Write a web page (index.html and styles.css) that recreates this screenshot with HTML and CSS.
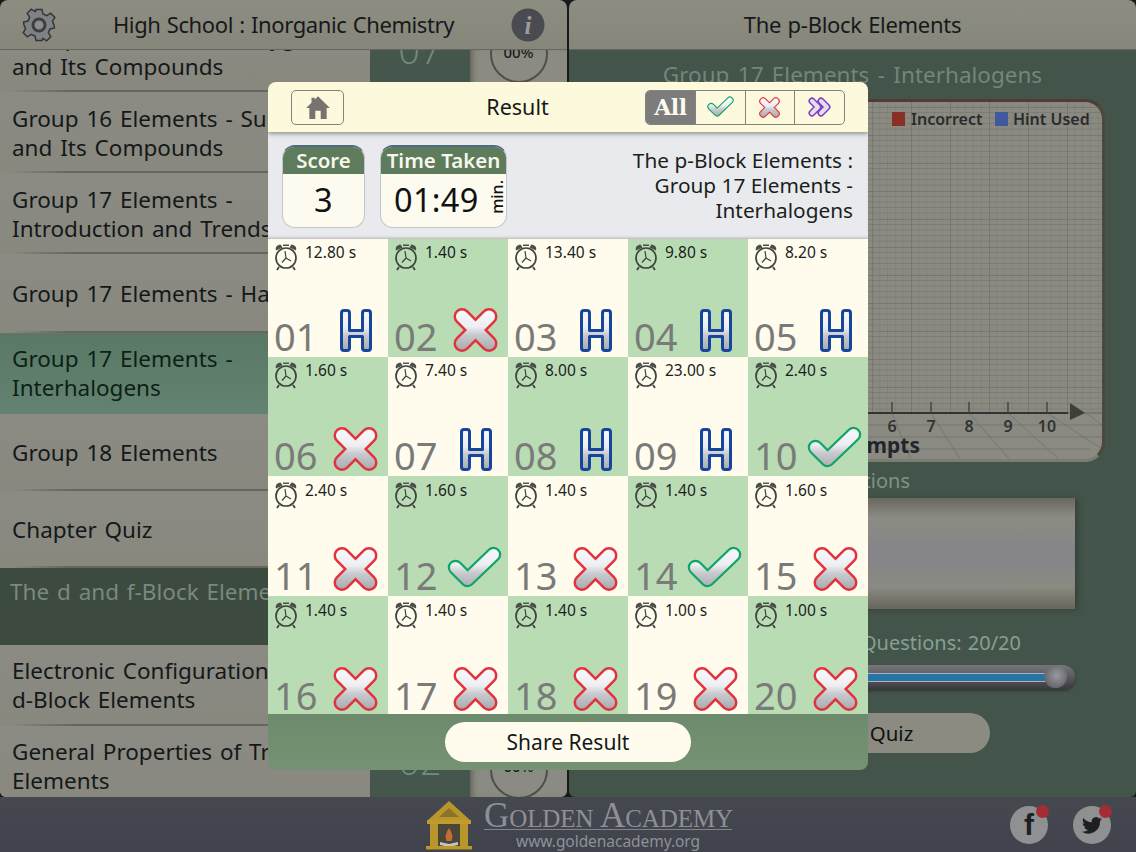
FILE: index.html
```html
<!DOCTYPE html>
<html lang="en">
<head>
<meta charset="utf-8">
<title>Golden Academy - Result</title>
<link rel="stylesheet" href="styles.css">
</head>
<body>
<svg class="defs" width="0" height="0" aria-hidden="true">
  <defs>
    <linearGradient id="metal" x1="0" y1="0" x2="0" y2="1">
      <stop offset="0" stop-color="#f6f7fb"/><stop offset=".42" stop-color="#eceef2"/><stop offset=".62" stop-color="#c9cacd"/><stop offset="1" stop-color="#a9abaf"/>
    </linearGradient>
    <linearGradient id="metalX" gradientUnits="userSpaceOnUse" x1="0" y1="2" x2="0" y2="42">
      <stop offset="0" stop-color="#f8f9fd"/><stop offset=".42" stop-color="#eceef2"/><stop offset=".62" stop-color="#c9cacd"/><stop offset="1" stop-color="#a9abaf"/>
    </linearGradient>
    <pattern id="grid" width="39" height="28" patternUnits="userSpaceOnUse" x="-1" y="8">
      <rect width="39" height="28" fill="none"/>
      <path d="M0 5.500H39M0 11H39M0 16.500H39M0 22H39" stroke="#77776c" stroke-width=".7"/>
      <path d="M7.800 0V28M15.600 0V28M23.400 0V28M31.200 0V28" stroke="#7d7d73" stroke-width=".6"/>
      <path d="M0 0H39M0 0V28" stroke="#66665c" stroke-width="1"/>
    </pattern>
    <symbol id="clock" viewBox="0 0 24 28">
      <path d="M2 7.500C1 4.500 3 2 6.500 1.600L8.600 4.400ZM22 7.500C23 4.500 21 2 17.500 1.600L15.400 4.400Z" fill="#4b4f49"/>
      <path d="M9 2.200H15" stroke="#4b4f49" stroke-width="1.400"/>
      <circle cx="12" cy="15" r="10" fill="none" stroke="#3f433e" stroke-width="1.700"/>
      <path d="M12 15L8 19.500M12 15L11 8M12 15L17 18" stroke="#3f433e" stroke-width="1.200" fill="none"/>
      <path d="M5 24L3 27M19 24L21 27" stroke="#3f433e" stroke-width="1.800"/>
    </symbol>
    <symbol id="wrong" viewBox="0 0 45 44">
      <path d="M9 8.500L36 35.500M36 8.500L9 35.500" stroke="#e2333d" stroke-width="17" stroke-linecap="round" fill="none"/>
      <path d="M9 8.500L36 35.500M36 8.500L9 35.500" stroke="url(#metalX)" stroke-width="12" stroke-linecap="round" fill="none"/>
    </symbol>
    <symbol id="right" viewBox="0 0 55 44">
      <path d="M8.500 21.500L20.500 33.500L46.500 8.500" stroke="#0fa566" stroke-width="15.500" stroke-linecap="round" stroke-linejoin="round" fill="none"/>
      <path d="M8.500 21.500L20.500 33.500L46.500 8.500" stroke="url(#metalX)" stroke-width="11" stroke-linecap="round" stroke-linejoin="round" fill="none"/>
    </symbol>
    <symbol id="hint" viewBox="0 0 32 43">
      <path d="M1.500 4Q1.500 1.500 4 1.500H7Q9.500 1.500 9.500 4V21.500H22.500V4Q22.500 1.500 25 1.500H28Q30.500 1.500 30.500 4V39Q30.500 41.500 28 41.500H25Q22.500 41.500 22.500 39V27.500H9.500V39Q9.500 41.500 7 41.500H4Q1.500 41.500 1.500 39Z" fill="url(#metal)" stroke="#15459c" stroke-width="3" stroke-linejoin="round"/>
    </symbol>
  </defs>
</svg>

<div class="app">
  <main class="main">
    <section class="panel">
      <header class="panel-head head-left">
        <svg class="head-icon" viewBox="0 0 34 34" aria-hidden="true">
          <g fill="#7f8184" stroke="#34363a" stroke-width="1.500">
            <path d="M14 1.500H20L21 6L24.800 7.600L28.700 5.200L32.800 9.300L30.400 13.200L32 17L32.500 20L28 21L26.400 24.800L28.800 28.700L24.700 32.800L20.800 30.400L20 32.500H14L13 28L9.200 26.400L5.300 28.800L1.200 24.700L3.600 20.800L2 17L1.500 14L6 13L7.600 9.200L5.200 5.300L9.300 1.200L13.200 3.600Z"/>
          </g>
          <circle cx="17" cy="17" r="6" fill="#8b8c8d" stroke="#3c3e42" stroke-width="3"/>
        </svg>
        <h1 class="panel-title left-title">High School : Inorganic Chemistry</h1>
        <svg class="head-icon" viewBox="0 0 34 34" aria-hidden="true">
          <circle cx="17" cy="17" r="16.500" fill="#4a4b50"/>
          <text x="17" y="26" text-anchor="middle" class="info-i">i</text>
        </svg>
      </header>
      <div class="left-body">
        <div class="topics">
          <div class="topics-inner">
            <div class="topic">Group 16 Elements - Oxygen<br>and Its Compounds</div>
            <div class="topic">Group 16 Elements - Sulphur<br>and Its Compounds</div>
            <div class="topic">Group 17 Elements -<br>Introduction and Trends</div>
            <div class="topic topic-single">Group 17 Elements - Halogens</div>
            <div class="topic topic-on">Group 17 Elements -<br>Interhalogens</div>
            <div class="topic topic-short">Group 18 Elements</div>
            <div class="topic topic-short">Chapter Quiz</div>
            <div class="topic-section">The d and f-Block Elements</div>
            <div class="topic topic-low">Electronic Configuration of<br>d-Block Elements</div>
            <div class="topic topic-low">General Properties of Transition<br>Elements</div>
          </div>
        </div>
        <div class="tallies">
          <div class="tally-top">07</div>
          <div class="tally-bottom">02</div>
        </div>
        <div class="rings">
          <div class="ring ring-top">00%</div>
          <div class="ring ring-bottom">00%</div>
        </div>
      </div>
    </section>

    <section class="panel">
      <header class="panel-head head-right">
        <h2 class="panel-title">The p-Block Elements</h2>
      </header>
      <div class="right-body">
        <div class="chart-title">Group 17 Elements - Interhalogens</div>
        <div class="chart">
          <svg class="chart-svg" viewBox="0 3 502 360" width="502" height="360" role="img" aria-label="Attempts chart">
            <rect width="502" height="314" fill="url(#grid)" y="0"/>
            <path d="M0 314H502" stroke="#66665c"/>
            <g stroke="#6e6e64" stroke-width=".7" fill="none">
              <path d="M292 314L312 363M331 314L362 363M369 314L412 363M408 314L462 363M447 314L502 350M486 314L502 326"/>
              <path d="M0 326H502M0 338H502M0 350H490"/>
            </g>
            <g class="axis">
              <path d="M0 314H468" stroke="#333" stroke-width="2"/>
              <path d="M292 303V314M331 303V314M369 303V314M408 303V314M447 303V314" stroke="#444" stroke-width="1.500"/>
              <path d="M470 304L485 314L470 321Z" fill="#3f3f3a"/>
            </g>
            <g class="tick-labels">
              <text x="292" y="333" text-anchor="middle">6</text>
              <text x="331" y="333" text-anchor="middle">7</text>
              <text x="369" y="333" text-anchor="middle">8</text>
              <text x="408" y="333" text-anchor="middle">9</text>
              <text x="447" y="333" text-anchor="middle">10</text>
            </g>
            <text class="axis-name" x="320" y="354" text-anchor="end">Attempts</text>
            <rect x="195" y="13" width="13" height="14" fill="#4f7a46"/>
            <text class="legend" x="251" y="26" text-anchor="end">Correct</text>
            <rect x="292" y="13" width="13" height="14" fill="#8a2f28"/>
            <text class="legend" x="311" y="26">Incorrect</text>
            <rect x="395" y="13" width="13" height="14" fill="#41589f"/>
            <text class="legend" x="413" y="26">Hint Used</text>
          </svg>
        </div>
        <div class="caption caption-a">All Questions</div>
        <div class="bars"></div>
        <div class="caption caption-b">Number of Questions: 20/20</div>
        <div class="slider"><div class="slider-fill"></div><div class="slider-knob"></div></div>
        <div class="quiz-btn">Attempt Quiz</div>
      </div>
    </section>
  </main>

  <footer class="footer">
    <svg class="logo" viewBox="0 0 48 50" aria-hidden="true">
      <path d="M24 1L45 20H3Z" fill="#b8962c"/>
      <path d="M24 8L34 17H14Z" fill="#8a7428"/>
      <rect x="2" y="20" width="44" height="4" fill="#c19c2c"/>
      <rect x="12" y="24" width="24" height="22" fill="#4a463a"/>
      <rect x="5" y="24" width="8" height="22" fill="#b8962c"/>
      <rect x="35" y="24" width="8" height="22" fill="#b8962c"/>
      <path d="M24 28Q29 35 26.500 41H21.500Q19 35 24 28Z" fill="#c56d35"/>
      <path d="M15 42L24 44L33 42V45L24 47L15 45Z" fill="#c8c7bd"/>
      <rect x="1" y="46" width="46" height="3.500" fill="#bb982b"/>
    </svg>
    <div class="brand">
      <div class="brand-name">Golden Academy</div>
      <div class="brand-url">www.goldenacademy.org</div>
    </div>
    <div class="socials">
      <div class="social"><span class="social-f">f</span><span class="dot"></span></div>
      <div class="social">
        <svg class="bird" viewBox="0 0 24 24" aria-hidden="true"><path d="M23 5.500c-.8.400-1.700.6-2.600.7.900-.6 1.600-1.400 1.900-2.400-.9.500-1.800.9-2.800 1.100A4.500 4.500 0 0 0 11.800 9C8 8.800 4.700 7 2.500 4.300c-1.200 2-.6 4.600 1.400 6-.7 0-1.400-.2-2-.6 0 2.200 1.500 4.100 3.600 4.500-.7.200-1.400.2-2 .1.600 1.800 2.300 3.100 4.200 3.100A9 9 0 0 1 1 19.300 12.800 12.800 0 0 0 20.700 7.900c.9-.6 1.700-1.400 2.300-2.400Z" fill="#1d1f22"/></svg>
        <span class="dot"></span>
      </div>
    </div>
  </footer>

  <div class="modal">
    <div class="modal-top">
      <div class="home-btn">
        <svg viewBox="0 0 24 24" width="26" height="26" aria-hidden="true"><path d="M12 2L23 13H20V23H14.500V15.500H9.500V23H4V13H1L6 8V3.500H9V5Z" fill="#77736f"/></svg>
      </div>
      <div class="modal-name">Result</div>
      <div class="filters">
        <div class="filter filter-on">All</div>
        <div class="filter"><svg width="27" height="22" aria-hidden="true"><use href="#right"/></svg></div>
        <div class="filter"><svg width="21" height="21" aria-hidden="true"><use href="#wrong"/></svg></div>
        <div class="filter">
          <svg viewBox="0 0 24 20" width="24" height="20" aria-hidden="true">
            <path d="M4 4L10 10L4 16M13 4L19 10L13 16" stroke="#7f3cc6" stroke-width="7" fill="none" stroke-linecap="round" stroke-linejoin="round"/>
            <path d="M4 4L10 10L4 16M13 4L19 10L13 16" stroke="#e4e0ea" stroke-width="4" fill="none" stroke-linecap="round" stroke-linejoin="round"/>
          </svg>
        </div>
      </div>
    </div>
    <div class="modal-info">
      <div class="stat stat-score">
        <div class="stat-head">Score</div>
        <div class="stat-value">3</div>
      </div>
      <div class="stat stat-time">
        <div class="stat-head">Time Taken</div>
        <div class="stat-value">01:49<span class="stat-unit">min.</span></div>
      </div>
      <div class="info-text">The p-Block Elements :<br>Group 17 Elements -<br>Interhalogens</div>
    </div>
    <div class="cells">
      <div class="cell"><div class="cell-top"><svg class="clock"><use href="#clock"/></svg><span>12.80 s</span></div><div class="cell-bottom"><span class="num">01</span><svg class="ico-h"><use href="#hint"/></svg></div></div>
      <div class="cell cell-g"><div class="cell-top"><svg class="clock"><use href="#clock"/></svg><span>1.40 s</span></div><div class="cell-bottom"><span class="num">02</span><svg class="ico-x"><use href="#wrong"/></svg></div></div>
      <div class="cell"><div class="cell-top"><svg class="clock"><use href="#clock"/></svg><span>13.40 s</span></div><div class="cell-bottom"><span class="num">03</span><svg class="ico-h"><use href="#hint"/></svg></div></div>
      <div class="cell cell-g"><div class="cell-top"><svg class="clock"><use href="#clock"/></svg><span>9.80 s</span></div><div class="cell-bottom"><span class="num">04</span><svg class="ico-h"><use href="#hint"/></svg></div></div>
      <div class="cell"><div class="cell-top"><svg class="clock"><use href="#clock"/></svg><span>8.20 s</span></div><div class="cell-bottom"><span class="num">05</span><svg class="ico-h"><use href="#hint"/></svg></div></div>

      <div class="cell cell-g"><div class="cell-top"><svg class="clock"><use href="#clock"/></svg><span>1.60 s</span></div><div class="cell-bottom"><span class="num">06</span><svg class="ico-x"><use href="#wrong"/></svg></div></div>
      <div class="cell"><div class="cell-top"><svg class="clock"><use href="#clock"/></svg><span>7.40 s</span></div><div class="cell-bottom"><span class="num">07</span><svg class="ico-h"><use href="#hint"/></svg></div></div>
      <div class="cell cell-g"><div class="cell-top"><svg class="clock"><use href="#clock"/></svg><span>8.00 s</span></div><div class="cell-bottom"><span class="num">08</span><svg class="ico-h"><use href="#hint"/></svg></div></div>
      <div class="cell"><div class="cell-top"><svg class="clock"><use href="#clock"/></svg><span>23.00 s</span></div><div class="cell-bottom"><span class="num">09</span><svg class="ico-h"><use href="#hint"/></svg></div></div>
      <div class="cell cell-g"><div class="cell-top"><svg class="clock"><use href="#clock"/></svg><span>2.40 s</span></div><div class="cell-bottom"><span class="num">10</span><svg class="ico-c"><use href="#right"/></svg></div></div>

      <div class="cell"><div class="cell-top"><svg class="clock"><use href="#clock"/></svg><span>2.40 s</span></div><div class="cell-bottom"><span class="num">11</span><svg class="ico-x"><use href="#wrong"/></svg></div></div>
      <div class="cell cell-g"><div class="cell-top"><svg class="clock"><use href="#clock"/></svg><span>1.60 s</span></div><div class="cell-bottom"><span class="num">12</span><svg class="ico-c"><use href="#right"/></svg></div></div>
      <div class="cell"><div class="cell-top"><svg class="clock"><use href="#clock"/></svg><span>1.40 s</span></div><div class="cell-bottom"><span class="num">13</span><svg class="ico-x"><use href="#wrong"/></svg></div></div>
      <div class="cell cell-g"><div class="cell-top"><svg class="clock"><use href="#clock"/></svg><span>1.40 s</span></div><div class="cell-bottom"><span class="num">14</span><svg class="ico-c"><use href="#right"/></svg></div></div>
      <div class="cell"><div class="cell-top"><svg class="clock"><use href="#clock"/></svg><span>1.60 s</span></div><div class="cell-bottom"><span class="num">15</span><svg class="ico-x"><use href="#wrong"/></svg></div></div>

      <div class="cell cell-g"><div class="cell-top"><svg class="clock"><use href="#clock"/></svg><span>1.40 s</span></div><div class="cell-bottom"><span class="num">16</span><svg class="ico-x"><use href="#wrong"/></svg></div></div>
      <div class="cell"><div class="cell-top"><svg class="clock"><use href="#clock"/></svg><span>1.40 s</span></div><div class="cell-bottom"><span class="num">17</span><svg class="ico-x"><use href="#wrong"/></svg></div></div>
      <div class="cell cell-g"><div class="cell-top"><svg class="clock"><use href="#clock"/></svg><span>1.40 s</span></div><div class="cell-bottom"><span class="num">18</span><svg class="ico-x"><use href="#wrong"/></svg></div></div>
      <div class="cell"><div class="cell-top"><svg class="clock"><use href="#clock"/></svg><span>1.00 s</span></div><div class="cell-bottom"><span class="num">19</span><svg class="ico-x"><use href="#wrong"/></svg></div></div>
      <div class="cell cell-g"><div class="cell-top"><svg class="clock"><use href="#clock"/></svg><span>1.00 s</span></div><div class="cell-bottom"><span class="num">20</span><svg class="ico-x"><use href="#wrong"/></svg></div></div>
    </div>
    <div class="modal-foot">
      <div class="share-btn">Share Result</div>
    </div>
  </div>
</div>
</body>
</html>
```

FILE: styles.css
```css
* { box-sizing: border-box; }
html, body { margin: 0; padding: 0; }
body { width: 1136px; height: 852px; overflow: hidden; font-family: "Noto Sans", "Open Sans", sans-serif; color: #15181a; }
.defs { position: absolute; }

.app { position: relative; width: 1136px; height: 852px; display: flex; flex-direction: column; background: #3f424c; }
.main { display: flex; gap: 2px; height: 797px; background: #17191a; }
.panel { width: 567px; display: flex; flex-direction: column; border-radius: 8px 8px 6px 6px; overflow: hidden; }
.panel:last-child { flex: 1; }

.panel-head { height: 50px; flex: none; display: flex; align-items: center; background: linear-gradient(#8d8d81, #86867a); border-bottom: 1px solid #66675f; position: relative; z-index: 2; }
.head-left { justify-content: space-between; padding: 0 22px; }
.head-right { justify-content: center; }
.head-icon { width: 34px; height: 34px; flex: none; }
.info-i { font: italic 700 25px "Liberation Serif", serif; fill: #9a9b9e; }
.panel-title { margin: 0 0 2px; font-size: 22px; font-weight: 400; letter-spacing: -.4px; word-spacing: 1px; color: #16191b; white-space: nowrap; }
.head-right .panel-title { letter-spacing: -.3px; }

.left-body { flex: 1; min-height: 0; display: flex; overflow: hidden; }
.topics { width: 370px; flex: none; overflow: hidden; background: #8a8a83; }
.topics-inner { margin-top: -39px; }
.topic { height: 81px; padding: 1px 0 0 12px; display: flex; align-items: center; font-size: 22.500px; line-height: 29px; word-spacing: 2px; color: #15181a; white-space: nowrap; overflow: hidden; background: linear-gradient(to right, transparent 12px, #66665e 70px) left bottom / 100% 2px no-repeat, linear-gradient(#8b8b83, #88887f); }
.topic-single { height: 79px; padding-top: 0; }
.topic-short { height: 77px; padding-top: 0; }
.topic-low { padding: 0 0 2px 12px; }
.topic-on { padding: 0 0 2px 12px; background: linear-gradient(#5a7865, #638271); color: #0d1f16; }
.topic-section { height: 77px; padding: 9px 0 0 10px; font-size: 22.500px; line-height: 29px; word-spacing: 2px; white-space: nowrap; overflow: hidden; background: #3d4a40; color: #78897f; }

.tallies { width: 100px; flex: none; display: flex; flex-direction: column; justify-content: space-between; align-items: center; background: #45574c; color: #728c7c; font-family: "Open Sans", sans-serif; font-weight: 300; font-size: 38px; overflow: hidden; }
.tally-top { height: 40px; line-height: 40px; margin-top: -21px; }
.tally-bottom { height: 40px; line-height: 40px; margin-bottom: 17px; }
.rings { flex: 1; display: flex; flex-direction: column; justify-content: space-between; align-items: center; background: #8b8b83; box-shadow: inset 6px 0 6px -4px #5d5d55; overflow: hidden; }
.ring { width: 58px; height: 58px; flex: none; border: 2px solid #4e4f4a; border-radius: 50%; display: flex; align-items: center; justify-content: center; font-size: 15px; font-weight: 500; color: #1c1e1f; }
.ring-top { margin-top: -25px; padding-bottom: 5px; }
.ring-bottom { margin-bottom: -2px; padding-bottom: 8px; }

.right-body { flex: 1; display: flex; flex-direction: column; align-items: center; background: #43544a; }
.chart-title { margin-top: 11px; height: 28px; line-height: 28px; font-size: 22.500px; color: #708779; word-spacing: 2.500px; white-space: nowrap; }
.chart { width: 505px; height: 363px; flex: none; margin-top: 10px; background: #8a8a82; border-radius: 20px; border-top: 3px solid #4f3c32; border-right: 3px solid #4f463d; border-bottom: 3px solid #7a7d71; overflow: hidden; }
.chart-svg { display: block; }
.legend { font: 600 16px "Noto Sans", sans-serif; fill: #2a2c2c; }
.tick-labels text { font: 600 16px "Noto Sans", sans-serif; fill: #333; }
.axis-name { font: 700 21px "Noto Sans", sans-serif; fill: #22252c; }

.caption { font-size: 20px; color: #7c9486; white-space: nowrap; line-height: 28px; word-spacing: 1px; }
.caption-a { margin-top: 5px; height: 28px; align-self: flex-end; margin-right: 226px; }
.bars { width: 446px; height: 111px; flex: none; margin-top: 3px; margin-left: -1px; background: linear-gradient(#68685f 0%, #8c8c84 18%, #84848a 50%, #8a8a82 80%, #66665c 100%); box-shadow: 3px 1px 5px #374239; }
.caption-b { margin-top: 20px; align-self: flex-end; margin-right: 115px; color: #86a092; }
.slider { width: 447px; height: 24px; flex: none; margin-top: 8px; margin-left: -2px; display: flex; align-items: center; position: relative; border-radius: 12px; background: linear-gradient(#76767a, #66666a 30%, #4d4d52 70%, #3a3a3e); box-shadow: 0 2px 3px #2e3a33; }
.slider-fill { width: 418px; height: 7px; background: #2873a6; border-top: 1px solid #a6b6c0; border-bottom: 1px solid #a6b6c0; box-sizing: content-box; }
.slider-knob { position: absolute; left: 416px; top: 0; width: 23px; height: 23px; border-radius: 50%; background: radial-gradient(circle at 55% 45%, #98989e, #66666c 70%, #505055); }
.quiz-btn { width: 275px; height: 40px; flex: none; margin-top: 24px; padding-right: 6px; border-radius: 20px; background: #8b8b81; display: flex; align-items: center; justify-content: center; font-size: 20.500px; color: #111; }

.footer { flex: 1; display: flex; align-items: center; padding: 0 25px 0 425px; background: linear-gradient(#45484f, #40434c); }
.logo { width: 48px; height: 50px; flex: none; }
.brand { margin-left: 11px; margin-top: 4px; width: 248px; color: #8d9197; text-align: center; }
.brand-name { font: 35px/30px "Liberation Serif", serif; font-variant: small-caps; height: 29px; border-bottom: 1px solid #81858b; white-space: nowrap; letter-spacing: -.1px; }
.brand-url { font-size: 15.500px; line-height: 23px; color: #8d9197; letter-spacing: -.05px; }
.socials { margin-left: auto; display: flex; gap: 25px; }
.social { position: relative; width: 38px; height: 38px; border-radius: 50%; background: #8f9092; display: flex; align-items: center; justify-content: center; }
.social-f { font: 700 30px/38px "Liberation Sans", sans-serif; color: #1d1f22; }
.bird { width: 22px; height: 22px; }
.dot { position: absolute; right: -1px; top: -1px; width: 13px; height: 13px; border-radius: 50%; background: #a32d33; }

.modal { position: absolute; left: 268px; top: 82px; width: 600px; height: 688px; display: flex; flex-direction: column; border-radius: 8px; overflow: hidden; }
.modal-top { height: 50px; flex: none; display: flex; align-items: center; justify-content: space-between; padding: 0 23px; position: relative; background: #fdf9dc; box-shadow: 0 2px 4px rgba(70, 70, 60, .5); z-index: 1; }
.home-btn { width: 53px; height: 35px; border: 1px solid #84827a; border-radius: 5px; display: flex; align-items: center; justify-content: center; }
.modal-name { font-size: 21.500px; color: #15181a; margin-left: 46px; margin-bottom: 2px; }
.filters { width: 200px; height: 35px; display: flex; border: 1px solid #84827a; border-radius: 5px; overflow: hidden; }
.filter { flex: 1; display: flex; align-items: center; justify-content: center; border-left: 1px solid #84827a; }
.filter:first-child { border-left: 0; }
.filter-on { background: #7c7c7c; color: #fdfaf0; font: 700 22px "DejaVu Serif", serif; letter-spacing: -.5px; }

.modal-info { height: 107px; flex: none; display: flex; align-items: flex-start; padding: 13px 15px 0 14px; gap: 15px; background: #e9eaee; box-shadow: inset 0 -3px 3px -2px #b0b0ae; }
.stat { height: 83px; border-radius: 13px; overflow: hidden; border: 1px solid #c3c6c6; border-top: 2px solid #4f6c80; background: #fdfbf0; display: flex; flex-direction: column; flex: none; }
.stat-score { width: 83px; }
.stat-time { width: 127px; }
.stat-head { height: 27px; flex: none; background: #5e7b5b; color: #f6f6ee; font-size: 20.500px; font-weight: 600; line-height: 26px; text-align: center; white-space: nowrap; }
.stat-value { flex: 1; display: flex; align-items: center; justify-content: center; font-size: 32.500px; color: #111; position: relative; letter-spacing: .3px; padding-bottom: 2px; }
.stat-time .stat-value { justify-content: flex-start; padding-left: 13px; }
.stat-unit { position: absolute; right: 1px; top: 6px; font-size: 16px; font-weight: 500; writing-mode: vertical-rl; transform: rotate(180deg); line-height: 16px; letter-spacing: 0; }
.info-text { margin-left: auto; margin-top: 3px; text-align: right; font-size: 20.800px; line-height: 25px; white-space: nowrap; color: #1b1e20; }

.cells { height: 475px; flex: none; display: grid; grid-template-columns: repeat(5, 120px); grid-template-rows: 118px 119px 120px 118px; }
.cell { display: flex; flex-direction: column; justify-content: space-between; background: #fffcee; padding: 4px 6px 5px 6px; }
.cell:nth-child(n+11) { padding-top: 5px; }
.cell:nth-child(n+16) { padding-bottom: 3px; }
.cell-g { background: #b9dcb5; }
.cell-top { display: flex; align-items: flex-start; gap: 7px; font-size: 15.500px; line-height: 18px; color: #1b1e1c; }
.clock { width: 24px; height: 28px; flex: none; }
.cell-bottom { display: flex; align-items: flex-end; justify-content: space-between; }
.num { font-size: 38px; line-height: 36px; margin-bottom: -2px; color: #7a7a78; }
.ico-x { width: 45px; height: 44px; margin-right: 4px; }
.ico-h { width: 32px; height: 43px; margin-right: 10px; }
.ico-c { width: 55px; height: 44px; margin-bottom: 1px; margin-right: 0; }

.modal-foot { flex: 1; display: flex; justify-content: center; padding-top: 8px; background: linear-gradient(#6e8a6c, #759374); }
.share-btn { width: 246px; height: 40px; border-radius: 20px; background: #fffcee; display: flex; align-items: center; justify-content: center; font-size: 21px; color: #15181a; }
```
